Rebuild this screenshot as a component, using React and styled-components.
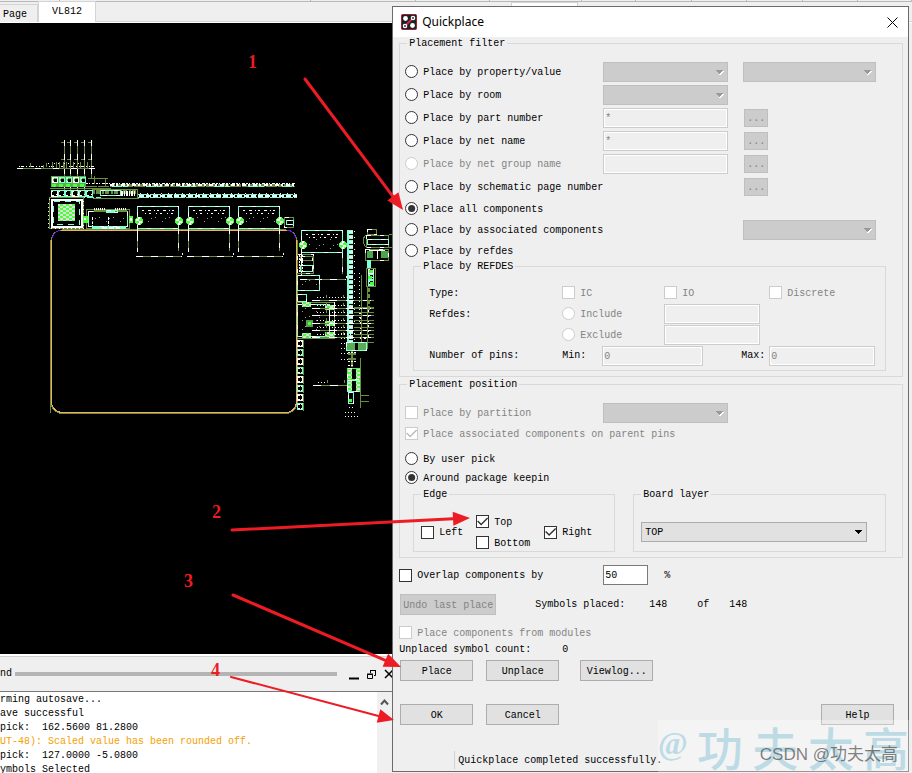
import React from 'react';
import styled, { createGlobalStyle } from 'styled-components';

const GlobalStyle = createGlobalStyle`
    * {
        box-sizing: border-box;
    }

    body {
        margin: 0;
        background: #efefef;
        color: #000;
        font-family: "Liberation Mono", "Noto Sans CJK SC", monospace;
        font-size: 10px;
        line-height: 14px;
    }

    button, input, select {
        margin: 0;
        font: inherit;
        color: inherit;
    }
`;

/* ---------- editor window ---------- */

const Desktop = styled.div`
    position: relative;
    display: flex;
    flex-direction: column;
    min-height: 100vh;
    overflow: hidden;
`;

const ToolStrip = styled.div`
    display: flex;
    height: 2px;
    border-bottom: 1px solid #b8b8b8;
`;

const ToolCell = styled.div`
    flex: ${props => props.$size} 0 0;
    border-right: 1px solid #b8b8b8;
`;

const TabBar = styled.nav`
    display: flex;
    align-items: flex-end;
    height: 21px;
    border-bottom: 1px solid #fff;
    box-shadow: inset 0 -1px 0 #d4d4d4;
`;

const Tab = styled.button`
    height: ${props => (props.$active ? '21px' : '18px')};
    padding: ${props => (props.$active ? '0 13px' : '2px 10px 0 3px')};
    border: 1px solid #d4d4d4;
    border-width: 1px 1px 0 ${props => (props.$active ? '1px' : '0')};
    background: ${props => (props.$active ? '#fff' : '#efefef')};
`;

const BackTab = styled.div`
    width: 67px;
    height: 20px;
    margin-left: auto;
    margin-right: 334px;
    border: 1px solid #d4d4d4;
    background: #fff;
`;

const Workspace = styled.div`
    display: flex;
    flex: 1;
    flex-direction: column;
    width: 43%;
`;

const Canvas = styled.main`
    flex: 1;
    background: #000;
    overflow: hidden;

    svg {
        display: block;
    }
`;

const Console = styled.section`
    display: flex;
    flex-direction: column;
    height: 119px;
    border-top: 2px solid #fff;
`;

const ConsoleHeader = styled.header`
    display: flex;
    align-items: center;
    height: 36px;
    margin-right: -10px;
    border-top: 1px solid #d0d0d0;
    border-bottom: 1px solid #777;
`;

const Grip = styled.div`
    flex: 1;
    height: 4px;
    margin: 0 11px 0 3px;
    background: #b4b4b4;
`;

const HeaderButton = styled.button`
    display: flex;
    width: 18px;
    padding: 0;
    border: 0;
    background: none;
`;

const ConsoleBody = styled.div`
    display: flex;
    flex: 1;
    background: #fff;
    overflow: hidden;
`;

const Log = styled.div`
    flex: 1;
    padding-top: 1px;
    white-space: pre;
`;

const LogLine = styled.div`
    color: ${props => (props.$warning ? '#f5a000' : '#000')};
`;

const ScrollBar = styled.div`
    width: 15px;
    padding: 5px 3px;
    background: #f0f0f0;
`;

/* ---------- dialog ---------- */

const Dialog = styled.section`
    position: absolute;
    top: 6px;
    right: 3px;
    left: 43%;
    border: 1px solid #6b6b6b;
    background: #efefef;
    white-space: nowrap;
`;

const TitleBar = styled.header`
    display: flex;
    align-items: center;
    gap: 5px;
    height: 30px;
    padding: 0 8px;
    background: #fff;
`;

const Title = styled.h1`
    flex: 1;
    margin: 0;
    font: 12px/16px "Noto Sans", sans-serif;
`;

const CloseButton = styled.button`
    display: flex;
    padding: 2px;
    border: 0;
    background: none;
`;

const Body = styled.form`
    padding: 1px 5px 2px 6px;
`;

const Group = styled.fieldset`
    min-width: 0;
    margin: 0 0 2px;
    padding: 0;
    border: 1px solid #d9d9d9;
`;

const SubGroup = styled(Group)`
    margin: 0 0 0 8px;
`;

const GroupBody = styled.div`
    padding: ${props => props.$padding};
`;

const Legend = styled.legend`
    margin-left: 7px;
    padding: 0 2px;
    line-height: 11px;
`;

const FilterRow = styled.div`
    display: grid;
    grid-template-columns: 198px 125px minmax(0, 133px);
    align-items: center;
    height: ${props => (props.$tight ? '21px' : '23px')};
`;

const RefdesGrid = styled.div`
    display: grid;
    grid-template-columns: 133px 102px 105px minmax(0, 106px);
    grid-auto-rows: 21px;
    align-items: center;
`;

const PinRange = styled.div`
    display: flex;
    align-items: center;
    grid-column: 2 / 4;
`;

const PinLabel = styled.label`
    width: 40px;
`;

const MaxLabel = styled.label`
    width: 28px;
    margin-left: auto;
`;

const CheckLabel = styled.label`
    display: inline-flex;
    align-items: center;
    gap: 5px;
    color: ${props => (props.$disabled ? '#838383' : '#000')};
`;

const LabelText = styled.span`
    padding-top: 2px;
`;

const Mark = styled.input`
    flex: none;
    width: 13px;
    height: 13px;
    border: 1px solid #333;
    background: #fff;
    appearance: none;

    &[type="radio"] {
        border-radius: 50%;
    }

    &:disabled {
        border-color: #ccc;
    }

    &:checked::before {
        content: "";
        display: block;
        width: 11px;
        height: 11px;
        background: #333;
        clip-path: polygon(0 50%, 9% 41%, 36% 68%, 91% 14%, 100% 23%, 36% 86%);
    }

    &[type="radio"]:checked::before {
        clip-path: circle(32%);
    }

    &:checked:disabled::before {
        background: #bbb;
    }
`;

const TextBox = styled.input`
    width: ${props => props.$width || '100%'};
    height: 20px;
    padding: 1px 1px 0;
    border: 1px solid #7a7a7a;
    border-radius: 0;
    background: #fff;

    &:disabled {
        border-color: #ccc;
        background: #efefef;
        box-shadow: inset 0 0 0 1px #fff;
        color: #838383;
    }
`;

const ComboWrap = styled.div`
    position: relative;
    margin-left: ${props => (props.$second ? '15px' : '0')};
    margin-right: ${props => (props.$second ? '-15px' : '0')};

    svg {
        position: absolute;
        top: 8px;
        right: 4px;
        pointer-events: none;
    }
`;

const ComboBox = styled.select`
    display: block;
    width: 100%;
    height: 20px;
    padding: 2px 3px 0;
    border: 1px solid #adadad;
    border-radius: 0;
    background: #e1e1e1;
    appearance: none;

    &:disabled {
        border-color: #bfbfbf;
        background: #ccc;
        opacity: 1;
    }
`;

const Button = styled.button`
    width: 73px;
    height: 21px;
    padding: 2px 0 0;
    border: 1px solid #adadad;
    background: #e1e1e1;

    &:disabled {
        border-color: #bfbfbf;
        background: #ccc;
        color: #838383;
    }
`;

const UndoButton = styled(Button)`
    width: 96px;
`;

const BrowseButton = styled(Button)`
    width: 24px;
    height: 18px;
    margin-left: 16px;
`;

const Options = styled.div`
    margin-bottom: 5px;
`;

const PickRow = styled.div`
    display: flex;
    align-items: center;
    height: 19px;
`;

const PositionPanels = styled.div`
    display: grid;
    grid-template-columns: 210px minmax(0, 1fr);
    gap: 10px;
    margin-top: 2px;
`;

const EdgeGrid = styled.div`
    display: grid;
    grid-template-columns: 55px 68px 1fr;
    align-items: center;
`;

const EdgeColumn = styled.div`
    display: grid;
    grid-auto-rows: 17px;
    gap: 4px;
`;

const LayerBox = styled.div`
    display: grid;
    align-items: center;
    height: 38px;
`;

const OverlapRow = styled.div`
    display: grid;
    grid-template-columns: 204px 61px 1fr;
    align-items: center;
    margin-top: 7px;
`;

const PlacedRow = styled.div`
    display: grid;
    grid-template-columns: 135px 114px 48px 32px 1fr;
    align-items: center;
    margin-top: 9px;
    padding-left: 1px;
`;

const ModulesRow = styled.div`
    display: flex;
    align-items: center;
    height: 17px;
    margin-top: 9px;
`;

const CountRow = styled.div`
    display: grid;
    grid-template-columns: 163px 1fr;
    margin: 2px 0 3px;
`;

const ButtonRow = styled.div`
    display: flex;
    gap: 13px;
    margin-bottom: 23px;
    padding: 0 9px 0 1px;
`;

const ViewlogButton = styled(Button)`
    margin-left: 8px;
`;

const HelpButton = styled(Button)`
    margin-left: auto;
`;

const StatusBar = styled.footer`
    height: 18px;
    margin: 26px 0 0 55px;
    padding: 3px;
    border-left: 1px solid #d0d0d0;
`;

/* ---------- things over the windows ---------- */

const Annotations = styled.svg`
    position: absolute;
    top: 0;
    left: 0;
    pointer-events: none;
`;

const Watermark = styled.div`
    position: absolute;
    right: 3px;
    bottom: 1px;
    display: flex;
    justify-content: space-between;
    width: 251px;
    height: 52px;
    background: rgba(255, 255, 255, 0.3);
    color: rgba(135, 195, 215, 0.5);
    font: 500 46px/52px "Noto Sans CJK SC", sans-serif;
    white-space: nowrap;
    overflow: hidden;
    pointer-events: none;
`;

const At = styled.span`
    font: bold 32px/46px "Liberation Serif", serif;
`;

const Credit = styled.div`
    position: absolute;
    right: 14px;
    bottom: 6px;
    color: rgba(90, 90, 90, 0.75);
    font: 17px/24px "Liberation Sans", "Noto Sans CJK SC", sans-serif;
    white-space: nowrap;
    pointer-events: none;
`;

/* ---------- board drawing ---------- */

const AQUA = '#7fffd4';
const OLIVE = '#6b8e3c';
const GREEN = '#4cff3c';
const ORANGE = '#f4b060';

const range = n => Array.from({ length: n }, (_, i) => i);

const Dashed = ({ d, color = OLIVE, dash = '7 8' }) => (
    <g fill="none">
        <path d={d} stroke={color} />
        <path d={d} stroke="#fff" strokeDasharray={dash} />
    </g>
);

const Box = ({ x, y, w, h, color = AQUA }) => (
    <g fill="none">
        <rect x={x + 0.5} y={y + 0.5} width={w} height={h} stroke={color} />
        <rect x={x + 0.5} y={y + 0.5} width={w} height={h} stroke="#fff" strokeDasharray="4 9" />
    </g>
);

const Ball = ({ x, y }) => (
    <g>
        <circle cx={x} cy={y} r="4" fill={GREEN} />
        <path d={`M${x - 3} ${y - 2}h3v2h-3z M${x} ${y}h3v2h-3z M${x - 1} ${y - 4}h2v2h-2z M${x - 1} ${y + 2}h2v2h-2z`} fill="#fff" />
    </g>
);

const Connector = ({ x, y, legs = 24 }) => (
    <g>
        <Box x={x} y={y} w={41} h={22} />
        <rect x={x + 3} y={y + 8} width="36" height="12" fill="url(#dots)" />
        <path d={`M${x + 5} ${y + 4.5}h34`} stroke="#fff" strokeDasharray="2 4 3 3 1 2" />
        <path d={`M${x + 8} ${y + 7.5}h30`} stroke="#fff" strokeDasharray="1 3 2 5" />
        <Ball x={x + 2} y={y + 15} />
        <Ball x={x + 42} y={y + 15} />
        <Dashed d={`M${x + 0.5} ${y + 23}v${legs - 1}`} dash="12 7" />
        <Dashed d={`M${x + 41.5} ${y + 23}v${legs - 2}`} dash="5 9" />
        <Dashed d={`M${x - 1} ${y + legs + 26.5}h46`} />
        <path d={`M${x + 45} ${y + legs + 23}h1v2h-1z`} fill="#fff" />
    </g>
);

const Cells = ({ x, y, n, step, vertical, size = 5 }) => (
    <g fill="none">
        {range(n).map(i => {
            const cx = vertical ? x : x + i * step;
            const cy = vertical ? y + i * step : y;
            return (
                <g key={i}>
                    <rect x={cx + 0.5} y={cy + 0.5} width={size} height={size} stroke={i % 3 ? AQUA : '#fff'} />
                    <path d={`M${cx + 1} ${cy + 1.5}h1 M${cx + size - 1} ${cy + size - 1.5}h1 M${cx + 1} ${cy + size - 0.5}h2`} stroke="#fff" />
                </g>
            );
        })}
    </g>
);

const Whisker = ({ y, x = 312, w = 62 }) => (
    <g>
        <Dashed d={`M${x} ${y + 0.5}h${w}`} dash="8 9" />
        <path d={`M${x + 5} ${y - 2.5}h${w - 28}`} stroke="#fff" strokeDasharray="1 2" />
        <path d={`M${x + 14.5} ${y - 5}v3 M${x + 31.5} ${y - 5}v3`} stroke={OLIVE} />
    </g>
);

const BoardDrawing = () => (
    <svg width="392" height="631" viewBox="0 23 392 631" shapeRendering="crispEdges" role="img" aria-label="VL812 board">
        <defs>
            <pattern id="checker" width="6" height="4" patternUnits="userSpaceOnUse">
                <rect width="6" height="4" fill="#ddd" />
                <path d="M0 0h3v2h-3z M3 2h3v2h-3z" fill={GREEN} />
            </pattern>
            <pattern id="dots" width="14" height="9" patternUnits="userSpaceOnUse">
                <path d="M1 1h1v1h-1z M8 5h1v1h-1z M11 2h1v1h-1z" fill="#999" />
            </pattern>
            <pattern id="column" width="6" height="5" patternUnits="userSpaceOnUse">
                <rect width="6" height="5" fill={AQUA} />
                <path d="M1 1h4v2h-4z" fill="#eee" />
                <path d="M1 4h4v1h-4z" fill="#000" />
            </pattern>
        </defs>

        {/* keepin outline */}
        <path d="M62 229.500H286 M50.500 240V413" stroke={OLIVE} />
        <path d="M297.500 240V400a12 12 0 0 1 -12 13.500H62a12 12 0 0 1 -11.500 -12V240" fill="none" stroke={OLIVE} />
        <path d="M61 230.500H287 M296.500 240V401a11 11 0 0 1 -11 11.500H63a11 11 0 0 1 -11.500 -11V240" fill="none" stroke={ORANGE} />
        <path d="M51.500 240a9 9 0 0 1 9.500 -9.500 M287 230.500a9 9 0 0 1 9.500 9.500" fill="none" stroke={OLIVE} />
        <path d="M52.500 238a8 8 0 0 1 8 -7.500 M287 230.500a8 8 0 0 1 8.500 7.500" fill="none" stroke="#8014f0" />

        {/* top left lines */}
        {[64, 70, 77, 84, 91].map(x => (
            <g key={x}>
                <Dashed d={`M${x + 0.5} 140v${x === 91 ? 38 : 58}`} dash="6 8" />
                <path d={`M${x - 3} 142.500h3 M${x - 3} 159.500h3 M${x - 2} 178.500h4`} stroke={OLIVE} />
            </g>
        ))}
        <Dashed d="M17 168.500h78" dash="6 12" />
        <path d="M19 166.500h76" stroke="#fff" strokeDasharray="1 1 3 2 1 2" />
        <path d="M52 164.500h36" stroke={OLIVE} strokeWidth="6" strokeDasharray="1 3 1 2" />
        <path d="M30.500 163v4 M46.500 163v4 M43.500 165v3" stroke={OLIVE} />
        <path d="M48 163.500h36" stroke="#fff" strokeDasharray="1 5 1 3" />

        {/* discrete rows */}
        <rect x="51" y="176" width="35" height="11" fill="#57b04c" />
        <Cells x={52} y={177} n={5} step={7} />
        <path d="M54 179h3v3h-3z M61 179h3v3h-3z M68 179h3v3h-3z M75 179h3v3h-3z M82 179h3v3h-3z" fill="#000" />
        <path d="M52 185.500h33" stroke={GREEN} strokeWidth="3" strokeDasharray="4 3" />
        <path d="M50 188.500h61" stroke={OLIVE} />
        <Cells x={51} y={190} n={6} step={7} size={6} />
        <path d="M51 190.500h42 M51 197.500h50" stroke={AQUA} strokeDasharray="7 2" />
        <path d="M86 183.500h209" stroke="#fff" strokeDasharray="2 1 1 2 3 1" />
        <path d="M86 186.500h209" stroke={OLIVE} strokeDasharray="11 1" />
        <path d="M110 185h184" stroke={OLIVE} strokeWidth="2" strokeDasharray="5 1" />
        <path d="M110 185h184" stroke="#fff" strokeWidth="2" strokeDasharray="4 2 2 3" />
        <path d="M112 186.500h182" stroke={AQUA} strokeDasharray="10 1 5 18" />
        <path d="M88 178.500h20 M94 176v8 M105.500 178v8 M92 189.500h46 M93 198.500h46 M137.500 189v10" fill="none" stroke={OLIVE} />
        <path d="M93 191.500h44" stroke={OLIVE} strokeWidth="4" strokeDasharray="2 1 4 2" />
        <Box x={100} y={190} w={20} h={5} />
        <path d="M121 193.500h15" stroke="#fff" strokeWidth="5" strokeDasharray="2 1 1 1" />
        <path d="M138 194.500h159 M138 197.500h159" stroke={AQUA} strokeDasharray="11 1" />
        <path d="M139 196h158" stroke="#fff" strokeWidth="2" strokeDasharray="5 2" />
        <path d="M140 193.500h156" stroke="#fff" strokeDasharray="1 6" />

        {/* main chip */}
        <rect x="49.500" y="197.500" width="34" height="31" fill="none" stroke={OLIVE} />
        <rect x="51.500" y="199.500" width="30" height="27" fill="none" stroke="#fff" strokeWidth="2" />
        <rect x="53.500" y="201.500" width="26" height="23" fill="none" stroke={AQUA} strokeDasharray="6 5" />
        <rect x="48.500" y="199.500" width="35" height="29" fill="none" stroke="#fff" strokeDasharray="1 3" />
        <rect x="58" y="204" width="17" height="17" fill="url(#checker)" />

        {/* usb connector */}
        <rect x="86.500" y="209.500" width="43" height="19" fill="none" stroke={OLIVE} />
        <Box x={88} y={211} w={39} h={15} />
        <path d="M92 227.500h34" stroke={AQUA} strokeWidth="2" />
        <path d="M102 227.500h18" stroke="#fff" strokeWidth="2" strokeDasharray="5 2" />
        <path d="M94 209.500h12 M115 209.500h12" stroke="#fff" strokeWidth="4" strokeDasharray="1 1" />
        <path d="M94 210.500h12 M115 210.500h12" stroke={OLIVE} strokeWidth="2" />
        <path d="M92.500 217v9 M108.500 217v9" stroke="#fff" strokeDasharray="3 1" />
        <rect x="90" y="213" width="36" height="12" fill="url(#dots)" />
        <Box x={106} y={210} w={11} h={2} />
        <rect x="83" y="216" width="5" height="7" fill={GREEN} />
        <rect x="129" y="216" width="4" height="7" fill={GREEN} />
        <path d="M84 218h2v2h-2z M130 218h2v3h-2z" fill="#fff" />

        <Connector x={137} y={206} />
        <Connector x={188} y={206} />
        <Connector x={238} y={206} />
        <Box x={284} y={217} w={9} h={10} color={OLIVE} />
        <Box x={286} y={220} w={7} h={4} />

        {/* right side parts */}
        <Connector x={301} y={230} legs={23} />
        <Box x={297} y={254} w={16} h={19} color={OLIVE} />
        <Box x={300} y={256} w={12} h={4} color={OLIVE} />
        <Box x={300} y={265} w={12} h={6} />
        <path d="M299.500 255v18 M302.500 255v18" stroke="#fff" strokeDasharray="2 1" />
        <Box x={297} y={275} w={22} h={15} />
        <rect x="300" y="278" width="17" height="11" fill="url(#dots)" />
        <Box x={297} y={294} w={9} h={7} />
        <rect x="297.500" y="302.500" width="37" height="36" fill="none" stroke={OLIVE} />
        <Box x={297} y={304} w={32} h={32} />
        <path d="M329.500 306v30 M334.500 302v36" stroke="#fff" strokeDasharray="6 3" />
        <rect x="300" y="308" width="20" height="26" fill="url(#dots)" />
        <rect x="302" y="302" width="9" height="5" fill="url(#checker)" />
        <rect x="302" y="333" width="9" height="5" fill="url(#checker)" />
        <rect x="325" y="305" width="9" height="5" fill="url(#checker)" />
        <rect x="325" y="321" width="9" height="5" fill="url(#checker)" />
        <rect x="325" y="332" width="9" height="5" fill="url(#checker)" />
        <rect x="306" y="320" width="7" height="7" fill="#55a04c" />
        <path d="M308 322h3v3h-3z" fill={GREEN} />

        {range(8).map(i => (
            <g key={i}>
                <rect x="297.500" y={340.5 + i * 9} width="5" height="6" fill="#000" stroke={i % 2 ? AQUA : '#fff'} />
                <path d={`M298 ${341.5 + i * 9}h4 M298 ${345.5 + i * 9}h4`} stroke="#fff" strokeDasharray="2 1" />
                <path d={`M303 ${339.5 + i * 9}v8`} stroke={OLIVE} />
            </g>
        ))}

        <rect x="347" y="230" width="6" height="113" fill="url(#column)" />
        <path d="M354.500 231v112" stroke="#fff" strokeDasharray="1 5" />
        {[300, 308, 315, 323, 330, 337].map(y => <Whisker key={y} y={y} />)}
        <path d="M361.500 275v68 M367.500 287v62" stroke={OLIVE} />
        <path d="M360 308h8v30h-8z" fill="none" stroke="#fff" strokeDasharray="2 3" />
        <path d="M341 333.500h12 M341 338.500h12 M341 343.500h10 M341 348.500h8 M341 353.500h8 M341 359.500h8" stroke="#fff" strokeDasharray="1 2" />
        <path d="M354 307.500h20 M354 312.500h20 M354 320.500h20 M354 327.500h20 M354 334.500h20 M354 342.500h20" stroke={OLIVE} />
        <path d="M359.500 273v50" stroke="#fff" strokeDasharray="1 3" />

        {/* far right column */}
        <Box x={367} y={229} w={9} h={5} color={OLIVE} />
        <Box x={366} y={235} w={22} h={12} color={OLIVE} />
        <Box x={367} y={239} w={21} h={5} />
        <path d="M366 235q-6 6 0 12 M389 235l3 -1 M389 247l3 1" fill="none" stroke={OLIVE} />
        <Box x={365} y={249} w={23} h={11} color={OLIVE} />
        <rect x="367" y="251" width="6" height="7" fill="#49a64c" />
        <rect x="381" y="251" width="7" height="7" fill="#49a64c" />
        <path d="M369 250h16 M377 251v8" fill="none" stroke="#fff" />
        <rect x="367" y="260" width="4" height="8" fill={AQUA} />
        <Cells x={368} y={268} n={3} step={6} vertical />
        <rect x="366.500" y="268.500" width="9" height="18" fill="none" stroke={OLIVE} />
        <path d="M369 270h4v3h-4z M368 276h4v3h-4z M370 282h4v3h-4z" fill={GREEN} />
        <path d="M368.500 288v22" stroke={OLIVE} strokeWidth="3" strokeDasharray="4 2" />

        {/* lower right column */}
        <rect x="347" y="343" width="8" height="7" fill="#59ad55" />
        <rect x="358" y="343" width="8" height="7" fill="#59ad55" />
        <Box x={346} y={342} w={20} h={8} />
        <path d="M351.500 351v16 M348 353.500h8 M348 358.500h8" stroke={OLIVE} strokeWidth="2" />
        <path d="M348 352.500h8 M348 361.500h8 M348 365.500h5" stroke="#fff" strokeDasharray="2 1" />
        <rect x="348" y="369" width="4" height="22" fill="url(#checker)" />
        <rect x="356" y="369" width="4" height="22" fill="url(#checker)" />
        <Box x={347} y={368} w={13} h={11} color={GREEN} />
        <Box x={347} y={380} w={13} h={11} />
        <Box x={348} y={392} w={5} h={11} />
        <path d="M349 399h3v3h-3z" fill={GREEN} />
        <path d="M360.500 358v50 M361 395.500h8 M361 401.500h8" stroke={OLIVE} />
        <Whisker y={385} x={313} w={35} />
        <path d="M349 407.500h5 M345 412.500h12 M345 416.500h14" stroke="#fff" strokeDasharray="1 2" />
    </svg>
);

const Arrow = ({ x1, y1, x2, y2, size = 17, width = 3 }) => {
    const angle = Math.atan2(y2 - y1, x2 - x1) * 180 / Math.PI;
    const length = Math.hypot(x2 - x1, y2 - y1);
    return (
        <g transform={`translate(${x1} ${y1}) rotate(${angle})`} fill="#ed1c24" stroke="#ed1c24">
            <line x2={length - size} strokeWidth={width} strokeLinecap="round" />
            <path d={`M${length} 0l-${size} -7v14z`} stroke="none" />
        </g>
    );
};

const Logo = () => (
    <svg width="16" height="16" viewBox="0 0 16 16" aria-hidden="true">
        <rect x="0.500" y="0.500" width="15" height="15" rx="1" fill="#17252b" stroke="#a51c30" />
        <path d="M3.500 12.500L12.500 3.500" stroke="#e02030" strokeWidth="2" />
        <circle cx="4.500" cy="4.500" r="2.400" fill="#fff" />
        <circle cx="11.500" cy="11.500" r="2.400" fill="#fff" />
        <circle cx="12" cy="4" r="1.600" fill="#17252b" stroke="#fff" strokeWidth="1.400" />
        <circle cx="4" cy="12" r="1.600" fill="#17252b" stroke="#fff" strokeWidth="1.400" />
    </svg>
);

/* ---------- controls ---------- */

const Check = ({ label, type = 'checkbox', disabled, ...rest }) => (
    <CheckLabel $disabled={disabled}>
        <Mark type={type} disabled={disabled} {...rest} />
        <LabelText>{label}</LabelText>
    </CheckLabel>
);

const Combo = ({ label, value = '', disabled, second }) => (
    <ComboWrap $second={second}>
        <ComboBox aria-label={label} disabled={disabled}>
            <option>{value}</option>
        </ComboBox>
        <svg width="9" height="6" aria-hidden="true" shapeRendering="crispEdges">
            {disabled && <path d="M8.500 1L4.500 5" stroke="#fff" strokeWidth="2" />}
            <path d="M0 0h8l-4 4z" fill={disabled ? '#999' : '#000'} />
        </svg>
    </ComboWrap>
);

const toolCells = [60, 253, 105, 74, 92, 54, 55, 55, 56, 54, 54];

const filters = [
    { label: 'Place by property/value', combo: true, second: true },
    { label: 'Place by room', combo: true },
    { label: 'Place by part number', text: '*', browse: true },
    { label: 'Place by net name', text: '*', browse: true },
    { label: 'Place by net group name', text: '', browse: true, disabled: true },
    { label: 'Place by schematic page number', browse: true },
    { label: 'Place all components', tight: true, checked: true },
    { label: 'Place by associated components', tight: true, second: true },
    { label: 'Place by refdes', tight: true }
];

const log = [
    { text: 'rming autosave...' },
    { text: 'ave successful' },
    { text: 'pick:  162.5600 81.2800' },
    { text: 'UT-48): Scaled value has been rounded off.', warning: true },
    { text: 'pick:  127.0000 -5.0800' },
    { text: 'ymbols Selected' }
];

const Filter = ({ item }) => (
    <FilterRow $tight={item.tight}>
        <Check type="radio" name="filter" label={item.label} disabled={item.disabled} defaultChecked={item.checked} />
        {item.combo && <Combo label={item.label} disabled />}
        {item.text !== undefined && <TextBox aria-label={item.label} defaultValue={item.text} disabled />}
        {!item.combo && item.text === undefined && <span />}
        {item.second && <Combo label={item.label + ' value'} disabled second />}
        {item.browse && <BrowseButton type="button" disabled>...</BrowseButton>}
    </FilterRow>
);

const Quickplace = () => (
    <Dialog role="dialog" aria-label="Quickplace">
        <TitleBar>
            <Logo />
            <Title>Quickplace</Title>
            <CloseButton aria-label="Close">
                <svg width="11" height="11" aria-hidden="true">
                    <path d="M0.500 0.500l10 10M10.500 0.500l-10 10" stroke="#000" />
                </svg>
            </CloseButton>
        </TitleBar>
        <Body onSubmit={e => e.preventDefault()}>
            <Group>
                <Legend>Placement filter</Legend>
                <GroupBody $padding="11px 16px 5px 5px">
                    {filters.map(item => <Filter key={item.label} item={item} />)}
                    <SubGroup>
                        <Legend>Place by REFDES</Legend>
                        <GroupBody $padding="10px 10px 4px 15px">
                            <RefdesGrid>
                                <LabelText>Type:</LabelText>
                                <Check label="IC" disabled />
                                <Check label="IO" disabled />
                                <Check label="Discrete" disabled />
                                <LabelText>Refdes:</LabelText>
                                <Check type="radio" name="refdes" label="Include" disabled />
                                <TextBox $width="96px" aria-label="Include refdes" disabled />
                                <span />
                                <span />
                                <Check type="radio" name="refdes" label="Exclude" disabled />
                                <TextBox $width="96px" aria-label="Exclude refdes" disabled />
                                <span />
                                <span>Number of pins:</span>
                                <PinRange>
                                    <PinLabel htmlFor="min">Min:</PinLabel>
                                    <TextBox id="min" $width="101px" defaultValue="0" disabled />
                                    <MaxLabel htmlFor="max">Max:</MaxLabel>
                                </PinRange>
                                <TextBox id="max" defaultValue="0" disabled />
                            </RefdesGrid>
                        </GroupBody>
                    </SubGroup>
                </GroupBody>
            </Group>

            <Group>
                <Legend>Placement position</Legend>
                <GroupBody $padding="12px 16px 5px 5px">
                    <Options>
                        <FilterRow $tight>
                            <Check label="Place by partition" disabled />
                            <Combo label="Partition" disabled />
                        </FilterRow>
                        <FilterRow $tight>
                            <Check label="Place associated components on parent pins" defaultChecked disabled />
                        </FilterRow>
                    </Options>
                    <PickRow>
                        <Check type="radio" name="position" label="By user pick" />
                    </PickRow>
                    <PickRow>
                        <Check type="radio" name="position" label="Around package keepin" defaultChecked />
                    </PickRow>
                    <PositionPanels>
                        <SubGroup>
                            <Legend>Edge</Legend>
                            <GroupBody $padding="13px 4px 0 7px">
                                <EdgeGrid>
                                    <Check label="Left" />
                                    <EdgeColumn>
                                        <Check label="Top" defaultChecked />
                                        <Check label="Bottom" />
                                    </EdgeColumn>
                                    <Check label="Right" defaultChecked />
                                </EdgeGrid>
                            </GroupBody>
                        </SubGroup>
                        <SubGroup>
                            <Legend>Board layer</Legend>
                            <GroupBody $padding="13px 18px 0 7px">
                                <LayerBox>
                                    <Combo label="Board layer" value="TOP" />
                                </LayerBox>
                            </GroupBody>
                        </SubGroup>
                    </PositionPanels>
                </GroupBody>
            </Group>

            <OverlapRow>
                <Check label="Overlap components by" />
                <TextBox $width="45px" aria-label="Overlap percent" defaultValue="50" />
                <LabelText>%</LabelText>
            </OverlapRow>
            <PlacedRow>
                <UndoButton type="button" disabled>Undo last place</UndoButton>
                <span>Symbols placed:</span>
                <span>148</span>
                <span>of</span>
                <span>148</span>
            </PlacedRow>
            <ModulesRow>
                <Check label="Place components from modules" disabled />
            </ModulesRow>
            <CountRow>
                <span>Unplaced symbol count:</span>
                <span>0</span>
            </CountRow>
            <ButtonRow>
                <Button type="button">Place</Button>
                <Button type="button">Unplace</Button>
                <ViewlogButton type="button">Viewlog...</ViewlogButton>
            </ButtonRow>
            <ButtonRow>
                <Button type="submit">OK</Button>
                <Button type="button">Cancel</Button>
                <HelpButton type="button">Help</HelpButton>
            </ButtonRow>
            <StatusBar>Quickplace completed successfully.</StatusBar>
        </Body>
    </Dialog>
);

const App = () => (
    <Desktop>
        <GlobalStyle />
        <ToolStrip>
            {toolCells.map((size, i) => <ToolCell key={i} $size={size} />)}
        </ToolStrip>
        <TabBar>
            <Tab>Page</Tab>
            <Tab $active>VL812</Tab>
            <BackTab />
        </TabBar>
        <Workspace>
            <Canvas>
                <BoardDrawing />
            </Canvas>
            <Console>
                <ConsoleHeader>
                    <span>nd</span>
                    <Grip />
                    <HeaderButton aria-label="Minimize">
                        <svg width="11" height="11"><path d="M1 9.500h10" stroke="#000" strokeWidth="2" /></svg>
                    </HeaderButton>
                    <HeaderButton aria-label="Restore">
                        <svg width="11" height="11" fill="none" stroke="#000">
                            <path d="M4.500 4V1.500h5v5H8 M4 1.500h6 M1.500 5.500h5v4h-5z M1 5h6" />
                        </svg>
                    </HeaderButton>
                    <HeaderButton aria-label="Close console">
                        <svg width="11" height="11"><path d="M1 1l8 8M9 1l-8 8" stroke="#000" strokeWidth="1.500" /></svg>
                    </HeaderButton>
                </ConsoleHeader>
                <ConsoleBody>
                    <Log>
                        {log.map(line => (
                            <LogLine key={line.text} $warning={line.warning}>{line.text}</LogLine>
                        ))}
                    </Log>
                    <ScrollBar>
                        <svg width="9" height="8" aria-hidden="true">
                            <path d="M1 6.500l3.500 -4l3.500 4" fill="none" stroke="#555" strokeWidth="2" />
                        </svg>
                    </ScrollBar>
                </ConsoleBody>
            </Console>
        </Workspace>
        <Quickplace />
        <Watermark aria-hidden="true">
            <At>@</At>
            <span>功</span>
            <span>夫</span>
            <span>太</span>
            <span>高</span>
        </Watermark>
        <Credit>CSDN @功夫太高</Credit>
        <Annotations width="912" height="773">
            <Arrow x1={305} y1={79} x2={403} y2={210} />
            <Arrow x1={232} y1={530} x2={470} y2={518} />
            <Arrow x1={233} y1={595} x2={401} y2={667} />
            <Arrow x1={231} y1={677} x2={394} y2={720} size={16} width={2} />
            <g fill="#ed1c24" fontFamily="Liberation Serif, serif" fontSize="18" fontWeight="bold">
                <text x="248" y="68">1</text>
                <text x="212" y="518">2</text>
                <text x="184" y="587">3</text>
                <text x="211" y="676">4</text>
            </g>
        </Annotations>
    </Desktop>
);

export default App;
